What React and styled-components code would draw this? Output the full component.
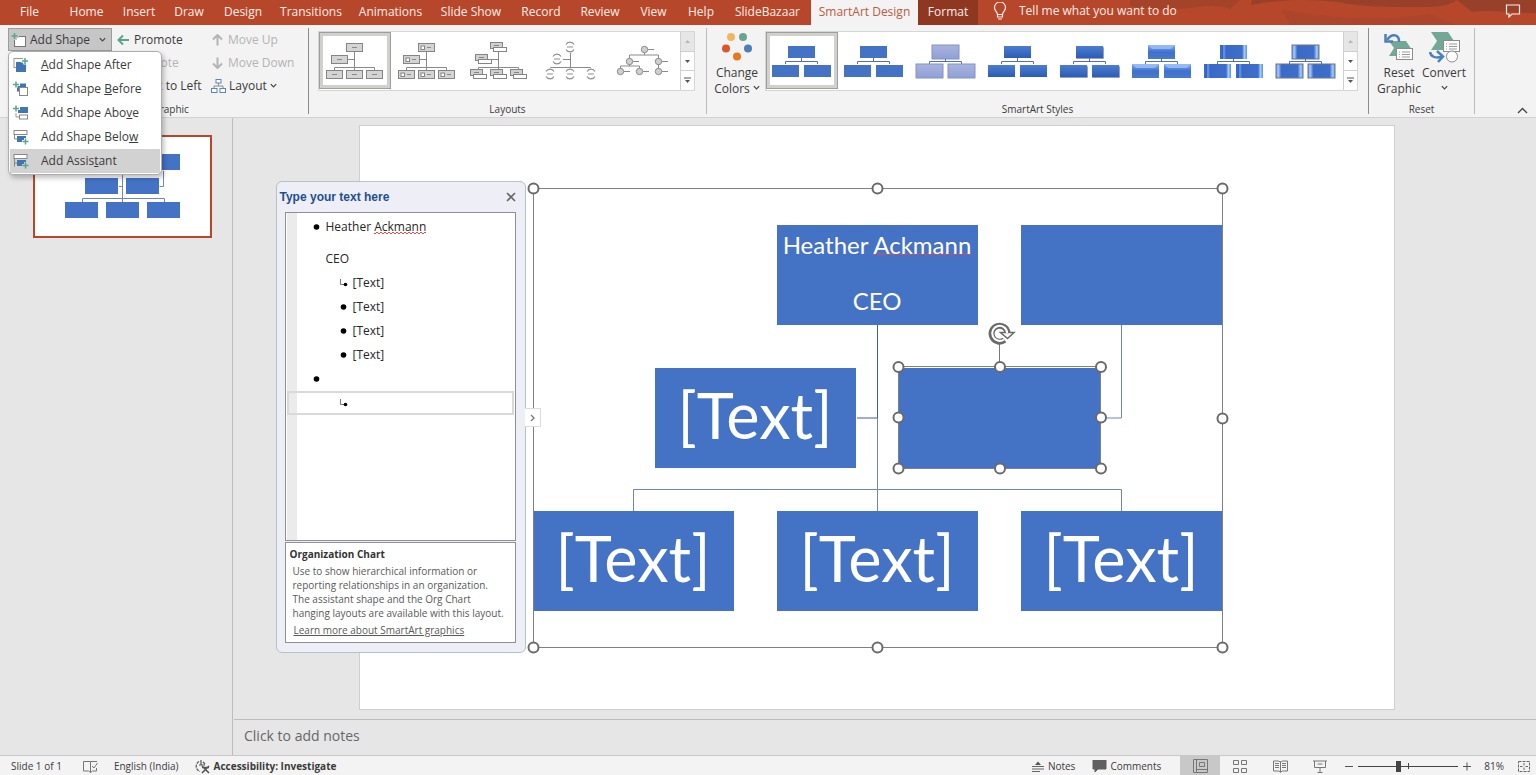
import React from "react";
import styled, { createGlobalStyle, css } from "styled-components";

const GlobalStyle = createGlobalStyle`
  * { box-sizing: border-box; }
  body { margin: 0; background: #e6e6e6; }
  button, input, textarea {
    font: inherit; color: inherit; border: 0; padding: 0; margin: 0;
    background: none; outline: none;
  }
  ul { list-style: none; margin: 0; padding: 0; }
  svg { display: block; flex: none; }
`;

const Window = styled.div`
  display: flex;
  flex-direction: column;
  min-height: 100vh;
  min-width: 1490px;
  overflow: hidden;
  font-family: "Open Sans", "Noto Sans", sans-serif;
  font-size: 12px;
  line-height: 16px;
  color: #3b3b3b;
  background: #e6e6e6;
`;

/* ---------- Tab strip ---------- */

const TabStrip = styled.nav`
  position: relative;
  display: flex;
  height: 25px;
  background: #b7472a;
  color: #fbeee9;
`;

const StripArt = styled.svg`
  position: absolute;
  right: 0;
  top: 0;
`;

const Tab = styled.button`
  width: ${(p) => p.$w}px;
  height: 25px;
  padding-bottom: 2px;
  white-space: nowrap;
  text-align: center;
  ${(p) => p.$look === "active" && css`background: #f3f3f3; color: #c05a40;`}
  ${(p) => p.$look === "related" && css`background: #8f3720;`}
`;

const TellMe = styled.label`
  position: relative;
  display: flex;
  flex: 1;
  align-items: center;
  gap: 12px;
  padding: 0 0 4px 15px;
  input { width: 240px; }
  input::placeholder { color: #fbeee9; opacity: 1; }
`;

const CommentButton = styled.button`
  position: relative;
  padding: 0 15px 3px;
`;

/* ---------- Ribbon ---------- */

const Ribbon = styled.header`
  display: flex;
  height: 93px;
  background: #f3f3f3;
  border-bottom: 1px solid #d2d2d2;
`;

const Group = styled.section`
  position: relative;
  display: flex;
  flex-direction: column;
  justify-content: space-between;
  width: ${(p) => p.$w}px;
  margin: 3px 0;
  padding-top: ${(p) => p.$top || 0}px;
  border-right: 1px solid ${(p) => (p.$dark ? "#8c8c8c" : "#bdbdbd")};
`;

const GroupLabel = styled.div`
  font-size: 10px;
  line-height: 14px;
  text-align: center;
  margin-bottom: -2px;
`;

const CommandGrid = styled.div`
  display: grid;
  grid-template-columns: 106px 94px 1fr;
  grid-auto-rows: 23px;
  padding-left: 8px;
`;

const Command = styled.button`
  display: flex;
  align-items: center;
  gap: ${(p) => p.$gap || 4}px;
  grid-column: ${(p) => p.$col};
  grid-row: ${(p) => p.$row};
  padding-left: 3px;
  white-space: nowrap;
  color: ${(p) => (p.disabled ? "#b4b4b4" : "#3b3b3b")};
`;

const SplitCommand = styled(Command)`
  width: 104px;
  padding-left: 2px;
  background: #c6c6c6;
  border: 1px solid #9c9c9c;
`;

const Chevron = styled.svg`
  margin-left: ${(p) => p.$push || 0}px;
`;

const Menu = styled.ul`
  position: absolute;
  z-index: 5;
  left: 8px;
  top: 23px;
  width: 154px;
  padding: 1px;
  background: #fff;
  border: 1px solid #acacac;
  border-radius: 5px;
  box-shadow: 2px 3px 5px rgba(0, 0, 0, 0.25);
`;

const MenuItem = styled.button`
  display: flex;
  align-items: center;
  gap: 12px;
  width: 100%;
  height: 24px;
  padding-left: 3px;
  background: ${(p) => (p.$active ? "#d2d2d2" : "transparent")};
  text-align: left;
`;

const GalleryRow = styled.div`
  display: flex;
  padding: 0 ${(p) => p.$right || 10}px 0 ${(p) => p.$left}px;
`;

const Gallery = styled.div`
  display: flex;
  flex: 1;
  height: 60px;
  background: #fff;
  border: 1px solid #d6d6d6;
`;

const GalleryItems = styled.div`
  display: flex;
  flex: 1;
`;

const GalleryItem = styled.button`
  width: 72px;
  height: 57px;
  ${(p) => p.$on && css`
    border: 1px solid #9e9e9a;
    box-shadow: inset 0 0 0 3px #d0d0cc;
    svg { margin: -1px; }
  `}
`;

const GalleryScroll = styled.div`
  display: flex;
  flex-direction: column;
  width: 14px;
  border-left: 1px solid #d0d0d0;
  button {
    flex: 1;
    display: grid;
    place-items: center;
    border-bottom: 1px solid #d0d0d0;
  }
  button:first-child { background: #e6e6e6; }
  button:last-child { border-bottom: 0; }
`;

const BigCommand = styled.button`
  display: flex;
  flex-direction: column;
  align-items: center;
  width: ${(p) => p.$w}px;
  height: 66px;
  padding-top: 1px;
  svg:first-child { margin-bottom: 2px; }
`;

const BigLabel = styled.span`
  display: flex;
  align-items: center;
  gap: 3px;
  height: 16px;
  white-space: nowrap;
`;

const RibbonEnd = styled.div`
  display: flex;
  flex: 1;
  align-items: flex-end;
  justify-content: flex-end;
  padding: 0 8px 3px 0;
`;

/* ---------- Work area ---------- */

const Work = styled.main`
  display: flex;
  flex: 1;
`;

const ThumbPane = styled.aside`
  width: 233px;
  padding: 17px 20px 0 33px;
  border-right: 1px solid #bdbdbd;
`;

const Thumb = styled.button`
  display: block;
  width: 179px;
  height: 103px;
  background: #fff;
  border: 2px solid #b7472a;
`;

const Editor = styled.section`
  display: flex;
  flex: 1;
  flex-direction: column;
`;

const Stage = styled.div`
  display: flex;
  flex: 1;
  justify-content: center;
  padding: 7px 16px 9px 0;
`;

const Slide = styled.div`
  position: relative;
  width: 1036px;
  height: 585px;
  background: #fff;
  border: 1px solid #cfcfcf;
`;

const Overlay = styled.svg`
  position: absolute;
  left: 0;
  top: 0;
  pointer-events: none;
`;

const Node = styled.div`
  position: absolute;
  left: ${(p) => p.$x}px;
  top: ${(p) => p.$y}px;
  display: flex;
  flex-direction: column;
  align-items: center;
  justify-content: center;
  width: 201px;
  height: 100px;
  background: #4472c4;
  color: #fff;
  font-family: Lato, Carlito, sans-serif;
  font-size: ${(p) => (p.$small ? 24 : 63)}px;
  line-height: ${(p) => (p.$small ? 28 : 64)}px;
  white-space: nowrap;
  padding-bottom: ${(p) => (p.$small ? 4 : 6)}px;
`;

const Misspelt = styled.span`
  --low: calc(100% - ${(p) => p.$lift}px);
  --high: calc(100% - ${(p) => p.$lift + 1}px);
  background:
    linear-gradient(90deg, #e5484d 2px, transparent 2px) 0 var(--low) / 4px 1px repeat-x,
    linear-gradient(90deg, #e5484d 2px, transparent 2px) 2px var(--high) / 4px 1px repeat-x;
`;

const Gap = styled.span`
  height: 28px;
`;

/* ---------- Text pane ---------- */

const TextPane = styled.section`
  position: absolute;
  left: -84px;
  top: 55px;
  width: 250px;
  padding: 0 9px 9px 8px;
  background: #eeeef6;
  border: 1px solid #b3c3c8;
  border-radius: 6px;
`;

const PaneHead = styled.div`
  display: flex;
  align-items: center;
  justify-content: space-between;
  height: 30px;
  margin-left: -5px;
  color: #1f4e8f;
  font: bold 12px/16px "Liberation Sans", Arial, sans-serif;
`;

const Outline = styled.ul`
  height: 329px;
  padding: 2px 1px;
  color: #262626;
  background: linear-gradient(90deg, #fff 1px, #ebebeb 1px, #ebebeb 11px, #fff 11px);
  border: 1px solid #8f8f96;
`;

const OutlineRow = styled.li`
  display: flex;
  align-items: center;
  gap: 5px;
  height: 24px;
  padding-left: ${(p) => (p.$level === 2 ? 49 : 22)}px;
  border: 2px solid ${(p) => (p.$current ? "#d9d9d9" : "transparent")};
`;

const ContinuedRow = styled(OutlineRow)`
  height: 32px;
  padding: 8px 0 0 37px;
`;

const About = styled.div`
  height: 101px;
  margin-top: 1px;
  padding: 4px 4px 0;
  background: #fff;
  border: 1px solid #8f8f96;
  font-size: 10px;
  line-height: 14px;
  color: #595959;
  h2 { margin: 0 0 3px; font-size: 10px; line-height: 14px; color: #333; }
  p { margin: 0 0 3px 3px; white-space: nowrap; }
  a { margin-left: 4px; color: inherit; }
`;

const PaneToggle = styled.button`
  position: absolute;
  left: 248px;
  top: 226px;
  display: grid;
  place-items: center;
  width: 16px;
  height: 19px;
  background: #fff;
  border: 1px solid #dcdcdc;
  border-left: 0;
`;

const Notes = styled.textarea`
  display: block;
  height: 36px;
  margin-left: 1px;
  padding: 7px 10px 0;
  border-top: 1px solid #bdbdbd;
  resize: none;
  overflow: hidden;
  font-size: 14px;
  line-height: 18px;
  &::placeholder { color: #666; opacity: 1; }
`;

/* ---------- Status bar ---------- */

const StatusBar = styled.footer`
  display: flex;
  height: 21px;
  padding: 0 6px 0 11px;
  background: #f3f3f3;
  border-top: 1px solid #c8c8c8;
  font-size: 10px;
  line-height: 20px;
`;

const StatusItem = styled.button`
  display: flex;
  align-items: center;
  gap: ${(p) => p.$gap || 4}px;
  margin-right: ${(p) => p.$after || 0}px;
  white-space: nowrap;
  font-weight: ${(p) => (p.$bold ? 700 : 400)};
`;

const Push = styled.span`
  flex: 1;
`;

const ViewButton = styled.button`
  display: grid;
  place-items: center;
  width: 40px;
  background: ${(p) => (p.$on ? "#c8c8c8" : "transparent")};
`;

const ZoomSlider = styled.input`
  appearance: none;
  width: 100px;
  height: 20px;
  margin: 0 5px;
  background:
    linear-gradient(#444, #444) 50px 50% / 1px 6px no-repeat,
    linear-gradient(#444, #444) 0 50% / 100% 1px no-repeat;
  &::-webkit-slider-thumb {
    appearance: none;
    width: 5px;
    height: 11px;
    background: #444;
  }
`;

/* ---------- Drawings ---------- */

const Down = ({ push, size = 7, color = "#444" }) => (
  <Chevron $push={push} width={size} height="6" viewBox="0 0 7 6" fill="none" stroke={color} strokeWidth="1.2">
    <path d="M.8 1.2 3.5 4 6.2 1.2" />
  </Chevron>
);

const Arrow = ({ turn = 0, color }) => (
  <svg width="13" height="12" viewBox="0 0 13 12" fill="none" stroke={color} strokeWidth="2">
    <g transform={`rotate(${turn} 6.5 6)`}>
      <path d="M1.500 6H12M6 1.500 1.500 6 6 10.500" />
    </g>
  </svg>
);

const AddShapeIcon = () => (
  <svg width="16" height="16" viewBox="0 0 16 16">
    <rect x="3.500" y="4.500" width="11" height="10" fill="#fff" stroke="#777" />
    <path d="M4 0v8M0 4h8" stroke="#c6c6c6" strokeWidth="4" />
    <path d="M3.500 1v6M.5 4h6" stroke="#5ba58b" strokeWidth="1.500" />
  </svg>
);

const LayoutIcon = () => (
  <svg width="15" height="14" viewBox="0 0 15 14" fill="#fff" stroke="#5b87b5">
    <path d="M7.500 4v3M3 9.500V7h9v2.500" fill="none" stroke="#8c8c8c" />
    <rect x="5" y=".5" width="5" height="3.500" />
    <rect x=".5" y="9.500" width="5.500" height="4" />
    <rect x="9" y="9.500" width="5.500" height="4" />
  </svg>
);

const Plus = ({ x, y }) => (
  <path d={`M${x} ${y - 3}v6M${x - 3} ${y}h6`} stroke="#5ba58b" strokeWidth="1.500" fill="none" />
);

const menuIcons = {
  after: (
    <>
      <rect x="1" y="1.500" width="9" height="9" fill="#fff" stroke="#999" />
      <rect x="3" y="5" width="10" height="10" fill="#3f76b3" />
      <path d="M8.500 4h7M12 .5v7" stroke="#fff" strokeWidth="3.500" />
      <Plus x={12} y={4} />
    </>
  ),
  before: (
    <>
      <rect x="4" y="2.500" width="9" height="8" fill="#3f76b3" />
      <rect x="6.500" y="6.500" width="8" height="8" fill="#fff" stroke="#888" />
      <path d="M3 0v7M0 3.500h7" stroke="#fff" strokeWidth="3" />
      <Plus x={3} y={3.5} />
    </>
  ),
  above: (
    <>
      <rect x="5" y="2" width="10" height="6" fill="#3f76b3" />
      <path d="M3 8v4h3" fill="none" stroke="#999" />
      <rect x="6.500" y="10" width="8" height="4" fill="#fff" stroke="#888" />
      <path d="M3 0v7M0 3.500h7" stroke="#fff" strokeWidth="3" />
      <Plus x={3} y={3.5} />
    </>
  ),
  below: (
    <>
      <rect x="1" y="1.500" width="13" height="4" fill="#fff" stroke="#888" />
      <path d="M1.500 6v4h3" fill="none" stroke="#888" />
      <rect x="4" y="7" width="9" height="6" fill="#3f76b3" />
      <path d="M12.500 9v7M9 12.500h7" stroke="#fff" strokeWidth="3" />
      <Plus x={12.5} y={12.5} />
    </>
  ),
  assistant: (
    <>
      <rect x="1" y="1.500" width="13" height="4" fill="#fff" stroke="#888" />
      <path d="M1.500 5.500v8M1.500 10H4" fill="none" stroke="#888" />
      <rect x="4" y="7" width="9" height="6" fill="#3f76b3" />
      <path d="M12.500 9v7M9 12.500h7" stroke="#d2d2d2" strokeWidth="3" />
      <Plus x={12.5} y={12.5} />
    </>
  ),
};

const LayoutArt = ({ kind }) => {
  const line = { fill: "none", stroke: "#8a8a8a", strokeWidth: 1 };
  const spots = [[27, 11], [12, 23], [7, 38], [27, 38], [47, 38]];
  const rings = [[35, 15], [22, 27], [15, 42], [35, 42], [56, 42]];
  const dots = [[37, 17], [22, 29], [51, 29], [13, 39], [32, 39], [51, 39]];
  return (
    <svg width="72" height="57" viewBox="0 0 72 57">
      {kind < 4 && <path d="M35.500 19v19M28 27.500h7M15.500 39v-3.500h40V39" {...line} />}
      {kind < 2 && spots.map(([x, y]) => (
        <g key={`${x}-${y}`}>
          <rect x={x + 0.5} y={y + 0.5} width="16" height="8" fill="#d4d4d4" stroke="#858585" />
          {kind === 1 && <rect x={x + 3} y={y + 3} width="3.500" height="3.500" fill="#fff" stroke="#858585" />}
          <path d={kind ? `M${x + 9} ${y + 4.5}h4` : `M${x + 6} ${y + 4.5}h5`} {...line} />
        </g>
      ))}
      {kind === 2 && spots.map(([x, y]) => (
        <g key={`${x}-${y}`} stroke="#858585">
          <rect x={x + 0.5} y={y - 0.5} width="12" height="6" fill="#d0d0d0" />
          <path d={`M${x + 4} ${y + 2.5}h5`} />
          <rect x={x + 3.5} y={y + 4.5} width="13" height="4" fill="#fff" />
        </g>
      ))}
      {kind === 3 && rings.map(([x, y]) => (
        <g key={`${x}-${y}`} fill="none" stroke="#8f8f8f" strokeWidth="1.200">
          <circle cx={x} cy={y} r="6" fill="#fff" stroke="none" />
          <path d={`M${x - 4} ${y - 2.5}a4.500 4.500 0 0 1 8 0M${x - 4} ${y + 2.5}a4.500 4.500 0 0 0 8 0M${x - 3} ${y}h6`} />
        </g>
      ))}
      {kind === 4 && (
        <>
          <path d="M37.500 17v6M22.500 29v-6h29v16M22.500 29v5M13.500 39v-5h19v5" {...line} />
          {dots.map(([x, y]) => (
            <g key={`${x}-${y}`}>
              <path d={`M${x + 4} ${y + 0.5}h6`} {...line} />
              <circle cx={x + 0.5} cy={y + 0.5} r="3.200" fill="#cfcfcf" stroke="#8a8a8a" />
            </g>
          ))}
        </>
      )}
    </svg>
  );
};

const styleLooks = [
  { fill: "#4472c4" },
  { fill: "#4472c4" },
  { fill: "url(#soft)", stroke: "#8492c4", tall: true },
  { fill: "url(#deep)" },
  { fill: "url(#deep)", shade: true },
  { fill: "url(#gloss)", tall: true },
  { fill: "url(#side)", tall: true },
  { fill: "url(#sides)", stroke: "#6b7487", tall: true },
];

const StyleArt = ({ look }) => (
  <svg width="72" height="57" viewBox="0 0 72 57">
    <path d="M35.500 26v4M19.500 32v-2.500h32V32" fill="none" stroke="#5470a8" />
    {[[22, 14], [6, 33], [38, 33]].map(([x, y]) => {
      const h = look.tall ? 14 : 12;
      const top = look.tall ? y - 1 : y;
      return (
        <g key={x}>
          {look.shade && <rect x={x} y={top + 1} width="28" height={h} rx="1" fill="#6d7890" opacity=".7" />}
          <rect x={x} y={top} width="27" height={h} fill={look.fill} stroke={look.stroke} />
          {look.fill === "url(#gloss)" && (
            <path d={`M${x} ${top}h27l-4 4h-19z`} fill="#9cc1f7" opacity=".8" />
          )}
        </g>
      );
    })}
  </svg>
);

const Gradients = () => (
  <Overlay width="0" height="0" aria-hidden="true">
    <defs>
      <linearGradient id="soft" x2="0" y2="1"><stop stopColor="#a9b4de" /><stop offset="1" stopColor="#8fa0d6" /></linearGradient>
      <linearGradient id="deep" x2="0" y2="1"><stop stopColor="#4d7dcf" /><stop offset="1" stopColor="#2b5db8" /></linearGradient>
      <linearGradient id="gloss" x2="0" y2="1"><stop stopColor="#7fabf2" /><stop offset=".5" stopColor="#3f70cb" /><stop offset="1" stopColor="#4a79cf" /></linearGradient>
      <linearGradient id="side">
        <stop stopColor="#3f70c8" /><stop offset=".1" stopColor="#3363be" /><stop offset=".14" stopColor="#6fa0ec" />
        <stop offset=".22" stopColor="#3a6ac6" /><stop offset=".82" stopColor="#3d6fca" />
        <stop offset=".9" stopColor="#a5ccfb" /><stop offset="1" stopColor="#5e90e4" />
      </linearGradient>
      <linearGradient id="sides">
        <stop stopColor="#5f92e2" /><stop offset=".08" stopColor="#a5ccfb" /><stop offset=".2" stopColor="#3a6ac6" />
        <stop offset=".8" stopColor="#3d6fca" /><stop offset=".92" stopColor="#a5ccfb" /><stop offset="1" stopColor="#5f92e2" />
      </linearGradient>
    </defs>
  </Overlay>
);

const ScrollButtons = () => (
  <GalleryScroll>
    <button aria-label="Scroll up"><svg width="5" height="3" viewBox="0 0 5 3"><path d="M0 3 2.500 0 5 3z" fill="#b8b8b8" /></svg></button>
    <button aria-label="Scroll down"><svg width="5" height="3" viewBox="0 0 5 3"><path d="M0 0h5L2.500 3z" fill="#555" /></svg></button>
    <button aria-label="More"><svg width="7" height="7" viewBox="0 0 7 7"><path d="M0 1h7" stroke="#555" /><path d="M1 3h5L3.500 6z" fill="#555" /></svg></button>
  </GalleryScroll>
);

const ColorDots = () => (
  <svg width="30" height="31" viewBox="0 0 30 31">
    <circle cx="9" cy="5" r="4" fill="#edb75f" />
    <circle cx="21" cy="5" r="4" fill="#69a58e" />
    <circle cx="4" cy="16.500" r="4" fill="#d9572f" />
    <circle cx="26" cy="16.500" r="4" fill="#4a7fb8" />
    <circle cx="15" cy="24.500" r="4" fill="#e57a1c" />
  </svg>
);

const ResetIcon = () => (
  <svg width="30" height="31" viewBox="0 0 30 31">
    <path d="M5 9h17l6 9-6 6H5l5-8z" fill="#74a896" />
    <rect x="12.500" y="16.500" width="16" height="11" fill="#fff" stroke="#8c8c8c" />
    <path d="M15 20h1m2 0h8M15 22.500h1m2 0h8M15 25h1m2 0h8" stroke="#999" />
    <path d="M15 10C15.500 3 8.500 0 3 8" fill="none" stroke="#4a80bb" strokeWidth="2.500" />
    <path d="M1.500 2v7.500H9" fill="none" stroke="#4a80bb" strokeWidth="2.500" />
  </svg>
);

const ConvertIcon = () => (
  <svg width="31" height="31" viewBox="0 0 31 31">
    <path d="M2 0h17l6 9-6 9H2l6-9z" fill="#74a896" />
    <rect x="14.500" y="8.500" width="16" height="11" fill="#fff" stroke="#8c8c8c" />
    <path d="M17 12h1m2 0h8M17 14.500h1m2 0h8M17 17h1m2 0h8" stroke="#999" />
    <circle cx="23" cy="24.500" r="5.500" fill="#fff" stroke="#8c8c8c" />
    <path d="M1 20c1 6 6 6 12 5" fill="none" stroke="#4a80bb" strokeWidth="2.500" />
    <path d="m8 19 6 5.500-5 5.500" fill="none" stroke="#4a80bb" strokeWidth="2.500" />
  </svg>
);

const Bullet = ({ sub }) =>
  sub ? (
    <svg width="10" height="9" viewBox="0 0 10 9">
      <path d="M2.500 0v5.500H6" fill="none" stroke="#777" />
      <circle cx="7.500" cy="5.500" r="1.800" fill="#000" />
    </svg>
  ) : (
    <svg width="10" height="6" viewBox="0 0 10 6"><circle cx="5.500" cy="3" r="2.800" fill="#000" /></svg>
  );

const Handle = ({ x, y }) => <circle cx={x} cy={y} r="5" fill="#fff" stroke="#6a6a6a" strokeWidth="2" />;

const miniNodes = [[127, 17], [50, 41], [91, 41], [30, 65], [71, 65], [112, 65]];

const ThumbArt = () => (
  <svg width="175" height="99" viewBox="0 0 175 99">
    <path d="M87.500 30v35M128.500 34v15.500h-4M84 49.500h3M47.500 65v-3.500h82V65" fill="none" stroke="#6f85bd" />
    {miniNodes.map(([x, y]) => (
      <rect key={`${x}-${y}`} x={x === 127 ? 112 : x} y={y} width="33" height="16" fill="#4472c4" />
    ))}
  </svg>
);

/* ---------- Content ---------- */

const tabs = [
  ["File", 59], ["Home", 55], ["Insert", 50], ["Draw", 50], ["Design", 58],
  ["Transitions", 78], ["Animations", 81], ["Slide Show", 80], ["Record", 60],
  ["Review", 58], ["View", 49], ["Help", 46], ["SlideBazaar", 87],
  ["SmartArt Design", 107, "active"], ["Format", 60, "related"],
];

const menuItems = [
  ["after", "", "A", "dd Shape After"],
  ["before", "Add Shape ", "B", "efore"],
  ["above", "Add Shape Abo", "v", "e"],
  ["below", "Add Shape Belo", "w", ""],
  ["assistant", "Add Assis", "t", "ant"],
];

export default function App() {
  return (
    <Window>
      <GlobalStyle />
      <Gradients />
      <TabStrip>
        <StripArt width="436" height="25" viewBox="0 0 436 25">
          <path d="M30 0h110l-10 9c-12-5-26-3-40-1-22 2-44 2-60-2z" fill="#a3432a" />
          <path d="M152 0h205c-10 7-24 7-38 7-32 0-58 0-80-5-30-3-56-3-88 3z" fill="#98402a" />
          <path d="M357 0h79v13c-24 0-50-4-64-1z" fill="#98402a" />
          <path d="M182 10q80 14 148 4l26 11H190z" fill="#ad452c" />
        </StripArt>
        {tabs.map(([name, w, look]) => (
          <Tab key={name} $w={w} $look={look}>{name}</Tab>
        ))}
        <TellMe>
          <svg width="14" height="18" viewBox="0 0 14 18" fill="none" stroke="#fbeee9" strokeWidth="1.200">
            <path d="M4.500 12.500c0-2.500-3-3.500-3-7a5.500 5.500 0 0 1 11 0c0 3.500-3 4.500-3 7zM4.500 12.500V15h5v-2.500M5 17h4" />
          </svg>
          <input aria-label="Search commands" placeholder="Tell me what you want to do" />
        </TellMe>
        <CommentButton aria-label="Comments pane">
          <svg width="16" height="14" viewBox="0 0 16 14" fill="none" stroke="#fbeee9" strokeWidth="1.200">
            <path d="M1.500 1h13v9H7l-3 3v-3H1.500z" />
          </svg>
        </CommentButton>
      </TabStrip>

      <Ribbon>
        <Group $w={309} $dark>
          <CommandGrid>
            <SplitCommand $col={1} $row={1} $gap={3}>
              <AddShapeIcon />Add Shape<Down push={6} />
            </SplitCommand>
            <Command $col={2} $row={1}><Arrow color="#5ba58b" />Promote</Command>
            <Command $col={2} $row={2} disabled><Arrow turn={180} color="#b4b4b4" />Demote</Command>
            <Command $col={2} $row={3}><Arrow turn={180} color="#5b87b5" />Right to Left</Command>
            <Command $col={3} $row={1} disabled><Arrow turn={90} color="#b4b4b4" />Move Up</Command>
            <Command $col={3} $row={2} disabled><Arrow turn={-90} color="#b4b4b4" />Move Down</Command>
            <Command $col={3} $row={3} $gap={3}><LayoutIcon />Layout<Down /></Command>
          </CommandGrid>
          <Menu>
            {menuItems.map(([id, before, key, after]) => (
              <li key={id}>
                <MenuItem $active={id === "assistant"}>
                  <svg width="16" height="16" viewBox="0 0 16 16">{menuIcons[id]}</svg>
                  <span>{before}<u>{key}</u>{after}</span>
                </MenuItem>
              </li>
            ))}
          </Menu>
          <GroupLabel>Create Graphic</GroupLabel>
        </Group>

        <Group $w={398} $top={3}>
          <GalleryRow $left={9} $right={11}>
            <Gallery>
              <GalleryItems>
                {[0, 1, 2, 3, 4].map((k) => (
                  <GalleryItem key={k} $on={k === 0} aria-label={`Layout ${k + 1}`}><LayoutArt kind={k} /></GalleryItem>
                ))}
              </GalleryItems>
              <ScrollButtons />
            </Gallery>
          </GalleryRow>
          <GroupLabel>Layouts</GroupLabel>
        </Group>

        <Group $w={662} $top={3} $dark>
          <GalleryRow $left={2} $right={10}>
            <BigCommand $w={56}>
              <ColorDots />
              <BigLabel>Change</BigLabel>
              <BigLabel>Colors<Down /></BigLabel>
            </BigCommand>
            <Gallery>
              <GalleryItems>
                {styleLooks.map((look, i) => (
                  <GalleryItem key={i} $on={i === 0} aria-label={`Style ${i + 1}`}><StyleArt look={look} /></GalleryItem>
                ))}
              </GalleryItems>
              <ScrollButtons />
            </Gallery>
          </GalleryRow>
          <GroupLabel>SmartArt Styles</GroupLabel>
        </Group>

        <Group $w={106} $top={3}>
          <GalleryRow $left={7} $right={6}>
            <BigCommand $w={46}>
              <ResetIcon />
              <BigLabel>Reset</BigLabel>
              <BigLabel>Graphic</BigLabel>
            </BigCommand>
            <BigCommand $w={44}>
              <ConvertIcon />
              <BigLabel>Convert</BigLabel>
              <BigLabel><Chevron as={Down} /></BigLabel>
            </BigCommand>
          </GalleryRow>
          <GroupLabel>Reset</GroupLabel>
        </Group>

        <RibbonEnd>
          <button aria-label="Collapse ribbon">
            <svg width="11" height="7" viewBox="0 0 11 7" fill="none" stroke="#444" strokeWidth="1.300"><path d="M1 6 5.500 1.500 10 6" /></svg>
          </button>
        </RibbonEnd>
      </Ribbon>

      <Work>
        <ThumbPane>
          <Thumb aria-label="Slide 1"><ThumbArt /></Thumb>
        </ThumbPane>
        <Editor>
          <Stage>
            <Slide>
              <Overlay width="1034" height="583" viewBox="0 0 1034 583" fill="none" stroke="#6d87bd">
                <path d="M517.500 199v93H497" stroke="#3f5f9f" />
                <path d="M517.500 292v93M761.500 199v93H741M273.500 385v-21.500h488V385" />
              </Overlay>
              <Node $x={417} $y={99} $small>
                <span>Heather <Misspelt $lift={4}>Ackmann</Misspelt></span>
                <Gap />
                <span>CEO</span>
              </Node>
              <Node $x={661} $y={99} />
              <Node $x={295} $y={242}>[Text]</Node>
              <Node $x={539} $y={242} />
              <Node $x={173} $y={385}>[Text]</Node>
              <Node $x={417} $y={385}>[Text]</Node>
              <Node $x={661} $y={385}>[Text]</Node>
              <Overlay width="1034" height="583" viewBox="0 0 1034 583">
                <rect x="173.500" y="62.500" width="689" height="459" fill="none" stroke="#808080" />
                <rect x="538.500" y="240.500" width="202" height="102" fill="none" stroke="#808080" />
                <path d="M639.500 217v20" stroke="#777" />
                {[173.5, 517.5, 862.5].map((x) => [62.5, 292.5, 521.5].map((y) =>
                  (x === 517.5 && y === 292.5) || (x === 173.5 && y === 292.5) ? null : <Handle key={`${x}-${y}`} x={x} y={y} />
                ))}
                {[538.5, 640, 741].map((x) => [241, 291.5, 342.5].map((y) =>
                  x === 640 && y === 291.5 ? null : <Handle key={`${x}-${y}`} x={x} y={y} />
                ))}
                <g fill="none">
                  <path d="M644.500 214a8 8 0 1 1 3-7.500" stroke="#6a6a6a" strokeWidth="6" />
                  <path d="M640.500 206.500h13.500l-6.500 6z" fill="#fff" stroke="#6a6a6a" strokeWidth="1.500" />
                  <path d="M644 213.500a7.500 7.500 0 1 1 3.200-6.500" stroke="#fff" strokeWidth="2" />
                </g>
              </Overlay>

              <TextPane>
                <PaneHead>
                  Type your text here
                  <button aria-label="Close">
                    <svg width="10" height="10" viewBox="0 0 10 10" stroke="#666" strokeWidth="1.600"><path d="m1 1 8 8M9 1 1 9" /></svg>
                  </button>
                </PaneHead>
                <Outline>
                  <OutlineRow><Bullet /><span>Heather <Misspelt $lift={1}>Ackmann</Misspelt></span></OutlineRow>
                  <ContinuedRow>CEO</ContinuedRow>
                  <OutlineRow $level={2}><Bullet sub />[Text]</OutlineRow>
                  <OutlineRow $level={2}><Bullet />[Text]</OutlineRow>
                  <OutlineRow $level={2}><Bullet />[Text]</OutlineRow>
                  <OutlineRow $level={2}><Bullet />[Text]</OutlineRow>
                  <OutlineRow><Bullet /></OutlineRow>
                  <OutlineRow $level={2} $current><Bullet sub /></OutlineRow>
                </Outline>
                <About>
                  <h2>Organization Chart</h2>
                  <p>
                    Use to show hierarchical information or<br />
                    reporting relationships in an organization.<br />
                    The assistant shape and the Org Chart<br />
                    hanging layouts are available with this layout.
                  </p>
                  <a href="#learn">Learn more about SmartArt graphics</a>
                </About>
                <PaneToggle aria-label="Toggle text pane">
                  <svg width="5" height="8" viewBox="0 0 5 8" fill="none" stroke="#777" strokeWidth="1.300"><path d="m1 1 3 3-3 3" /></svg>
                </PaneToggle>
              </TextPane>
            </Slide>
          </Stage>
          <Notes aria-label="Notes" placeholder="Click to add notes" />
        </Editor>
      </Work>

      <StatusBar>
        <StatusItem $after={21}>Slide 1 of 1</StatusItem>
        <StatusItem $after={16} aria-label="Spelling">
          <svg width="15" height="13" viewBox="0 0 15 13" fill="none" stroke="#777">
            <path d="M7.500 1.500v11M7.500 1.500h-7v9.500h5l2 1.500 2-1.500h4V8M7.500 1.500h6.500M9 6l2 2 3.500-5" />
          </svg>
        </StatusItem>
        <StatusItem $after={16}>English (India)</StatusItem>
        <StatusItem $bold $gap={3}>
          <svg width="16" height="15" viewBox="0 0 16 15" fill="none" stroke="#555" strokeWidth="1.200">
            <path d="M4 2.500A5.500 5.500 0 0 0 5 12.500" strokeDasharray="3 1" />
            <path d="M6 1v5M4 6h6M8 3l2 2" />
            <path d="m7 7 7 7M14 7l-7 7M7 8.500h7" strokeWidth="1.600" />
          </svg>
          Accessibility: Investigate
        </StatusItem>
        <Push />
        <StatusItem $after={17}>
          <svg width="12" height="11" viewBox="0 0 12 11"><path d="M3 4 6 .5 9 4z" fill="#555" /><path d="M0 5.500h12M0 8h12M0 10.500h8" stroke="#666" /></svg>
          Notes
        </StatusItem>
        <StatusItem $after={19} $gap={3}>
          <svg width="15" height="12" viewBox="0 0 15 12"><path d="M1 0h13v9H6l-3 3V9H1z" fill="#606060" stroke="#606060" strokeLinejoin="round" /></svg>
          Comments
        </StatusItem>
        <ViewButton $on aria-label="Normal view">
          <svg width="15" height="14" viewBox="0 0 15 14" fill="none" stroke="#777"><path d="M.5 .5h14v13H.5zM3.500 .5v13M3.500 10.500h11" /><path d="M6.500 3.500h5v4h-5z" /></svg>
        </ViewButton>
        <ViewButton aria-label="Slide sorter">
          <svg width="14" height="13" viewBox="0 0 14 13" fill="none" stroke="#777"><path d="M.5 .5h5v4h-5zM8.500 .5h5v4h-5zM.5 8.500h5v4h-5zM8.500 8.500h5v4h-5z" /></svg>
        </ViewButton>
        <ViewButton aria-label="Reading view">
          <svg width="15" height="13" viewBox="0 0 15 13" fill="none" stroke="#777"><path d="M7.500 1.500v11M.5 1h5l2 1 2-1h5v10h-5l-2 1-2-1h-5zM2 3.500h4M2 5.500h4M2 7.500h4M9 3.500h4M9 5.500h4M9 7.500h4" /></svg>
        </ViewButton>
        <ViewButton aria-label="Slide show">
          <svg width="14" height="13" viewBox="0 0 14 13" fill="none" stroke="#777"><path d="M0 1h14M1.500 1v6.500h11V1M7 7.500v5M4.500 12.500h5M4.500 4h5" /></svg>
        </ViewButton>
        <StatusItem aria-label="Zoom out">
          <svg width="13" height="9" viewBox="0 0 13 9" stroke="#555"><path d="M5 4.500h8" /></svg>
        </StatusItem>
        <ZoomSlider type="range" min="0" max="100" defaultValue="40" aria-label="Zoom" />
        <StatusItem $after={13} aria-label="Zoom in">
          <svg width="8" height="9" viewBox="0 0 8 9" stroke="#555"><path d="M0 4.500h8M4 .5v8" /></svg>
        </StatusItem>
        <StatusItem $after={14}>81%</StatusItem>
        <StatusItem aria-label="Fit slide to window">
          <svg width="12" height="11" viewBox="0 0 12 11" fill="none" stroke="#666"><path d="M.5 .5h11v10H.5z" strokeDasharray="3 1" /><path d="M6 2v2.500M6 6.500V9M2 5.500h2.500M7.500 5.500H10" /></svg>
        </StatusItem>
      </StatusBar>
    </Window>
  );
}
